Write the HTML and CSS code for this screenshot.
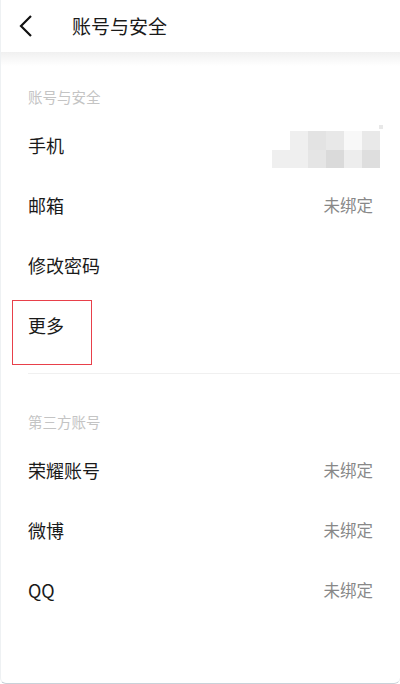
FILE: index.html
```html
<!DOCTYPE html>
<html>
<head>
    <meta charset="utf-8">
    <link rel="stylesheet" href="styles.css">
</head>
<body>
    <div class="screen">
        <div class="header">
            <span class="back">
                <svg width="14" height="22" viewBox="0 0 14 22">
                    <polyline points="12,1 2,11 12,21" fill="none" stroke="#111" stroke-width="2.2"/>
                </svg>
            </span>
            <span class="title">账号与安全</span>
        </div>
        <div class="shade"></div>

        <div class="section first">
            <div class="section-title">账号与安全</div>
            <div class="row">
                <span class="label">手机</span>
                <div class="mosaic">
                    <div class="dot"></div>
                    <div class="mrow top">
                        <i style="background:#efefef"></i>
                        <i style="background:#e3e3e3"></i>
                        <i style="background:#e8e8e8"></i>
                        <i style="background:#f8f8f8"></i>
                        <i style="background:#e9e9e9"></i>
                    </div>
                    <div class="mrow">
                        <i style="background:#efefef"></i>
                        <i style="background:#efefef"></i>
                        <i style="background:#e5e5e5"></i>
                        <i style="background:#dadada"></i>
                        <i style="background:#ededed"></i>
                        <i style="background:#dedede"></i>
                    </div>
                </div>
            </div>
            <div class="row">
                <span class="label">邮箱</span>
                <span class="value">未绑定</span>
            </div>
            <div class="row">
                <span class="label">修改密码</span>
            </div>
            <div class="row">
                <span class="label">更多</span>
                <div class="mark"></div>
            </div>
        </div>

        <div class="section">
            <div class="section-title">第三方账号</div>
            <div class="row">
                <span class="label">荣耀账号</span>
                <span class="value">未绑定</span>
            </div>
            <div class="row">
                <span class="label">微博</span>
                <span class="value">未绑定</span>
            </div>
            <div class="row">
                <span class="label">QQ</span>
                <span class="value">未绑定</span>
            </div>
        </div>
    </div>
</body>
</html>
```

FILE: styles.css
```css
html, body
{
    margin: 0;
    padding: 0;
    background: #fff;
}
body
{
    font-family: "Noto Sans CJK SC", "Noto Sans", sans-serif;
    color: #1a1a1a;
}
.screen
{
    width: 400px;
    height: 684px;
    box-sizing: border-box;
    border-left: 1px solid #eef1f3;
    border-bottom: 1px solid #c9d2d9;
    border-radius: 0 0 6px 6px;
    overflow: hidden;
}
.header
{
    height: 52px;
    display: flex;
    align-items: center;
}
.back
{
    display: flex;
    margin-left: 18px;
    width: 14px;
}
.title
{
    margin-left: 39px;
    font-size: 19px;
    line-height: 24px;
}
.shade
{
    height: 14px;
    background: linear-gradient(#f0f0f0, #fff);
}
.section
{
    padding-bottom: 58px;
}
.section.first
{
    padding-bottom: 18px;
    border-bottom: 1px solid #f0f0f0;
    margin-left: 27px;
}
.section.first .section-title,
.section.first .row
{
    margin-left: -27px;
}
.section-title
{
    padding: 21px 0 0 27px;
    font-size: 14.5px;
    line-height: 20px;
    color: #c4c4c4;
    margin-bottom: 8px;
}
.section + .section .section-title
{
    padding-top: 38px;
}
.row
{
    position: relative;
    height: 60px;
    display: flex;
    align-items: center;
    justify-content: space-between;
    padding: 0 27px;
}
.label
{
    font-size: 18px;
    line-height: 24px;
}
.value
{
    font-size: 16.5px;
    line-height: 22px;
    color: #888;
}
.mosaic
{
    position: relative;
    display: flex;
    flex-direction: column;
    align-items: flex-end;
    margin-right: -7px;
    margin-top: 8px;
}
.mrow
{
    display: flex;
}
.mrow i
{
    display: block;
    width: 18px;
    height: 18px;
}
.mrow.top i
{
    height: 19px;
}
.dot
{
    position: absolute;
    right: -3px;
    top: -6px;
    width: 4px;
    height: 4px;
    background: #e8e8e8;
}
.mark
{
    position: absolute;
    left: 11px;
    top: 5px;
    width: 78px;
    height: 63px;
    border: 1.5px solid #e8404a;
}
```
